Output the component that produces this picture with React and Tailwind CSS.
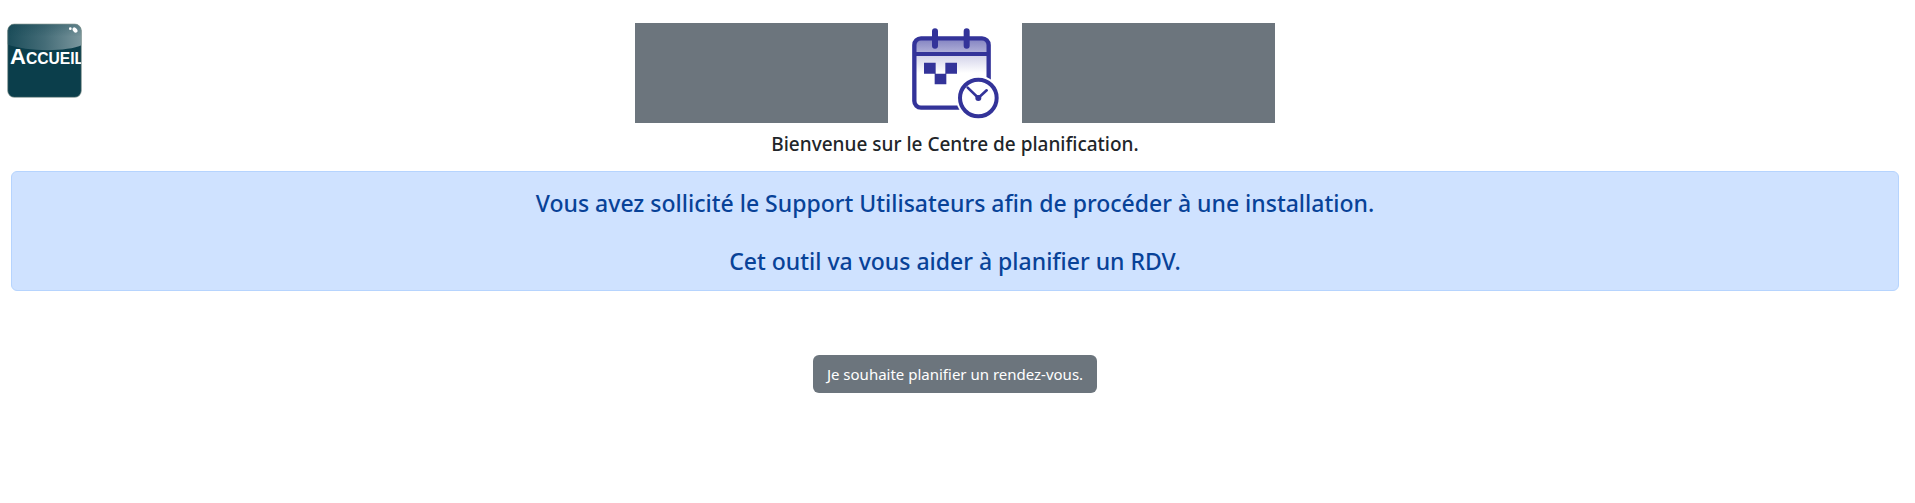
function HomeLogo() {
  return (
    <svg viewBox="0 0 225 225" className="size-[75px]" role="img" aria-label="Accueil">
      <defs>
        <linearGradient id="gloss" x1="0" y1="0" x2="1" y2="0">
          <stop offset="0" stopColor="#1b4d5a" />
          <stop offset="0.5" stopColor="#446c77" />
          <stop offset="1" stopColor="#7b979e" />
        </linearGradient>
        <linearGradient id="fade" x1="0" y1="0" x2="0" y2="1">
          <stop offset="0" stopColor="#0d3f4d" stopOpacity="0.3" />
          <stop offset="0.5" stopColor="#0d3f4d" stopOpacity="0" />
        </linearGradient>
        <clipPath id="tile">
          <rect x="2" y="3" width="221" height="220" rx="20" />
        </clipPath>
      </defs>
      <g clipPath="url(#tile)">
        <rect width="225" height="225" fill="#0b3e4b" />
        <path d="M0 0H225V66C180 87 60 87 0 64Z" fill="url(#gloss)" />
        <path d="M0 0H225V66C180 87 60 87 0 64Z" fill="url(#fade)" />
        <ellipse cx="204" cy="21" rx="6" ry="9" transform="rotate(-38 204 21)" fill="#fff" />
        <circle cx="190" cy="17" r="4" fill="#fff" />
        <text x="9" y="123" fill="#fff" fontWeight="700" fontFamily="Liberation Sans, Arial, sans-serif">
          <tspan fontSize="66">A</tspan>
          <tspan fontSize="47">CCUEIL</tspan>
        </text>
      </g>
      <rect x="2" y="3" width="221" height="220" rx="20" fill="none" stroke="#8f9f98" strokeWidth="2" />
    </svg>
  );
}

function CalendarIcon() {
  return (
    <svg viewBox="0 0 300 300" className="size-[100px]" fill="none" stroke="#333399" aria-hidden="true">
      <defs>
        <linearGradient id="band" x1="0" y1="0" x2="0" y2="1">
          <stop offset="0" stopColor="#8080c0" />
          <stop offset="1" stopColor="#b4b4da" />
        </linearGradient>
        <linearGradient id="shade" x1="0" y1="0" x2="0" y2="1">
          <stop offset="0" stopColor="#d2d2e9" />
          <stop offset="1" stopColor="#ffffff" />
        </linearGradient>
      </defs>
      <rect x="28" y="45" width="223" height="48" rx="14" fill="url(#band)" stroke="none" />
      <rect x="28" y="96" width="223" height="54" fill="url(#shade)" stroke="none" />
      <rect x="28" y="46" width="223" height="208" rx="20" strokeWidth="13" />
      <path d="M28 93H251" strokeWidth="12" />
      <path d="M90 25V68M185 25V68" strokeWidth="18" strokeLinecap="round" />
      <path d="M57 119H92V152H121V119H156V152H124V184H89V152H57Z" fill="#333399" stroke="none" />
      <circle cx="220" cy="225" r="67" fill="#fff" stroke="none" />
      <circle cx="220" cy="225" r="55" strokeWidth="12" />
      <path d="M188 194L220 225L245 202" strokeWidth="8" strokeLinecap="round" />
      <circle cx="220" cy="225" r="9" fill="#333399" stroke="none" />
    </svg>
  );
}

export default function App() {
  return (
    <div className="bg-white pr-4 pl-[11px] pt-[23px] font-['Noto_Sans',sans-serif] text-[#212529]">
      <header className="grid grid-cols-[1fr_auto_1fr] items-start">
        <a href="#accueil" className="-ml-1 justify-self-start">
          <HomeLogo />
        </a>
        <div className="flex items-center gap-[17px]">
          <div className="h-[100px] w-[253px] bg-[#6c757d]" />
          <CalendarIcon />
          <div className="h-[100px] w-[253px] bg-[#6c757d]" />
        </div>
      </header>
      <main className="text-center">
        <h1 className="mt-[9px] text-[19px] leading-6 font-medium">Bienvenue sur le Centre de planification.</h1>
        <div className="mt-[15px] rounded-md border border-[#b6d4fe] bg-[#cfe2ff] px-4 pt-[17px] pb-[14px] text-[23px] leading-[29px] font-medium text-[#084298]">
          <p>Vous avez sollicité le Support Utilisateurs afin de procéder à une installation.</p>
          <p className="mt-[29px]">Cet outil va vous aider à planifier un RDV.</p>
        </div>
        <button type="button" className="mt-16 rounded-md bg-[#6c757d] px-[14px] py-[7px] text-[15px] leading-6 text-white">
          Je souhaite planifier un rendez-vous.
        </button>
      </main>
    </div>
  );
}
